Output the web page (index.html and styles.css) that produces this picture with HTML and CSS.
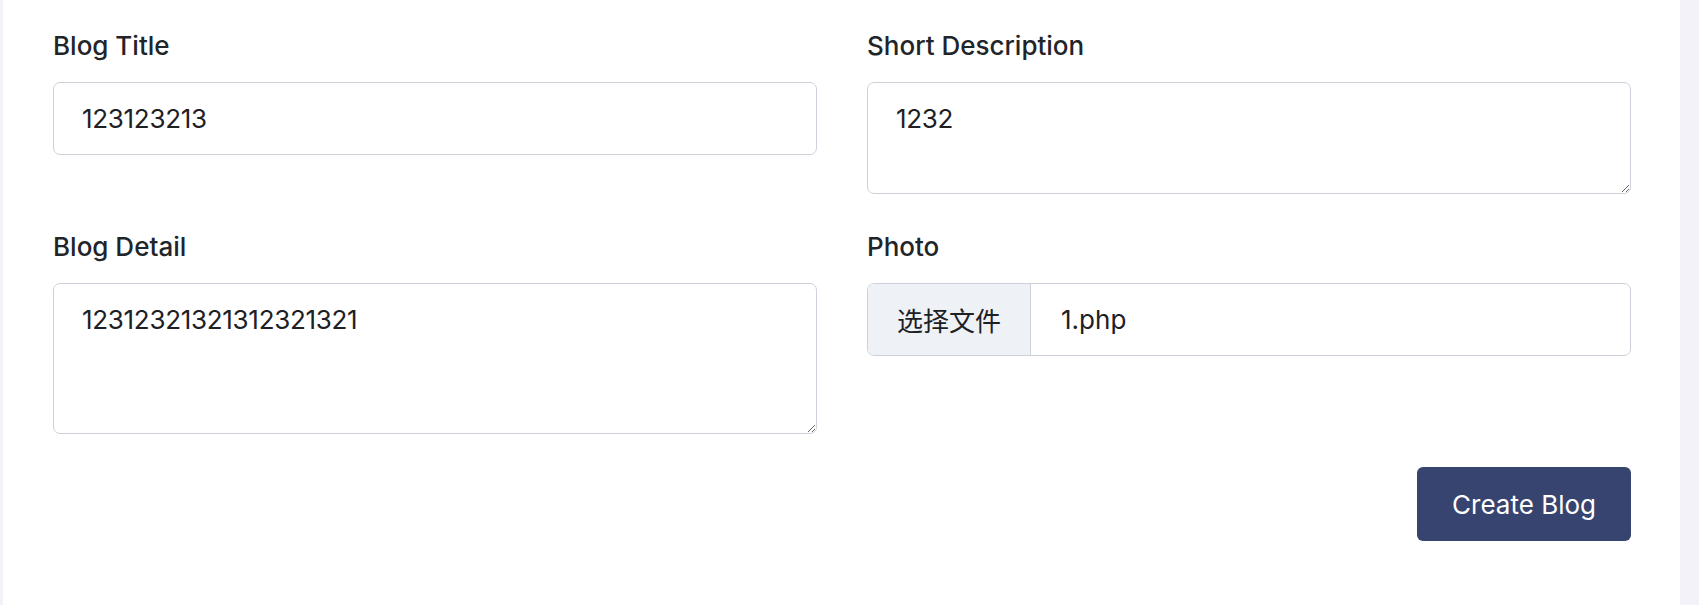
FILE: index.html
```html
<!DOCTYPE html>
<html lang="en">
<head>
<meta charset="utf-8">
<title>Create Blog</title>
<link rel="stylesheet" href="styles.css">
</head>
<body>
<div class="page">
  <div class="card">
    <form class="form">
      <div class="grid">
        <div class="field">
          <label class="label">Blog Title</label>
          <input class="control input" type="text" value="123123213">
        </div>
        <div class="field">
          <label class="label">Short Description</label>
          <textarea class="control textarea textarea-sm">1232</textarea>
        </div>
        <div class="field">
          <label class="label">Blog Detail</label>
          <textarea class="control textarea textarea-lg">12312321321312321321</textarea>
        </div>
        <div class="field">
          <label class="label">Photo</label>
          <div class="control file">
            <span class="file-btn">选择文件</span>
            <span class="file-name">1.php</span>
          </div>
        </div>
      </div>
      <div class="actions">
        <button class="btn" type="button">Create Blog</button>
      </div>
    </form>
  </div>
</div>
</body>
</html>
```

FILE: styles.css
```css
* { box-sizing: border-box; }
html, body {
  margin: 0;
  padding: 0;
  height: 100%;
}
body {
  background: #f2f2f8;
  font-family: "Inter", "Noto Sans", "Noto Sans CJK SC", sans-serif;
  color: #212529;
  overflow: hidden;
}
.page {
  padding-left: 3px;
  width: 1680px;
  height: 605px;
}
.card {
  background: #ffffff;
  height: 100%;
  padding: 26px 49px 0 50px;
}
.grid {
  display: grid;
  grid-template-columns: 1fr 1fr;
  column-gap: 50px;
  row-gap: 33px;
  align-items: start;
}
.field {
  display: flex;
  flex-direction: column;
}
.label {
  font-size: 26px;
  line-height: 39px;
  font-weight: 500;
  margin-bottom: 17px;
  color: #212529;
}
.control {
  display: block;
  width: 100%;
  border: 1px solid #cdd2da;
  border-radius: 7px;
  background: #fff;
  font-family: "Inter", "Noto Sans", "Noto Sans CJK SC", sans-serif;
  font-size: 26px;
  line-height: 39px;
  color: #1d2024;
  padding: 16px 28px;
  margin: 0;
  outline: none;
  letter-spacing: -0.3px;
}
.input { height: 73px; }
.textarea {
  resize: vertical;
  font-family: "Inter", "Noto Sans", "Noto Sans CJK SC", sans-serif;
}
.textarea-sm { height: 112px; }
.textarea-lg { height: 151px; }
.file {
  display: flex;
  align-items: stretch;
  height: 73px;
  padding: 0;
  overflow: hidden;
  letter-spacing: 0;
}
.file-btn {
  display: flex;
  align-items: center;
  padding: 0 29px;
  background: #eef1f6;
  border-right: 1px solid #cdd2da;
  font-family: "Noto Sans CJK SC", sans-serif;
  font-size: 26px;
}
.file-name {
  display: flex;
  align-items: center;
  padding-left: 30px;
}
.actions {
  display: flex;
  justify-content: flex-end;
  margin-top: 33px;
}
.btn {
  height: 74px;
  padding: 0 35px;
  border: none;
  border-radius: 6px;
  background: #37446f;
  color: #ffffff;
  font-family: "Inter", "Noto Sans", sans-serif;
  font-size: 26px;
  line-height: 39px;
  font-weight: 400;
  cursor: pointer;
}
```
